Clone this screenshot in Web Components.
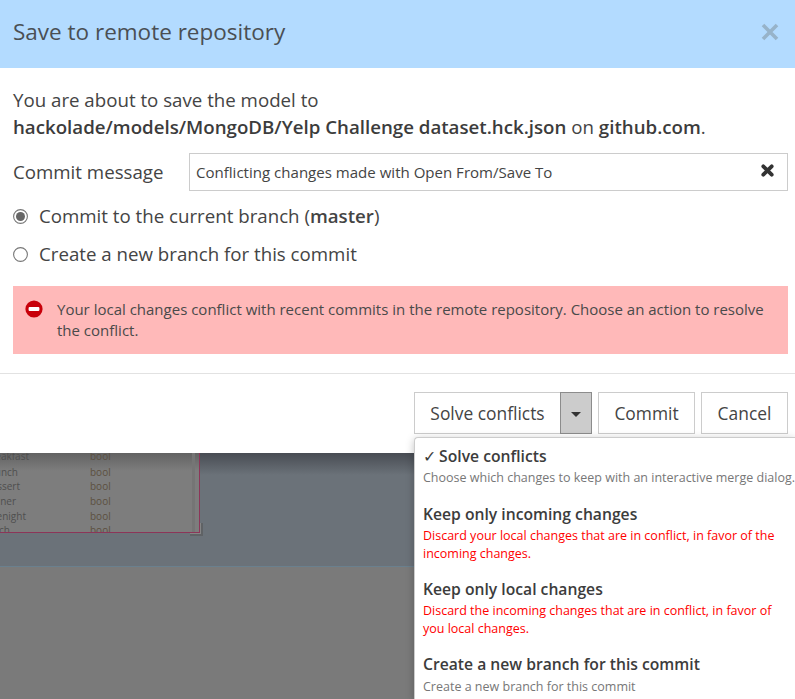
<!DOCTYPE html>
<html>
<head>
<meta charset="utf-8">
<title>Save to remote repository</title>
<style>
    html, body { margin: 0; padding: 0; height: 699px; overflow: hidden; background: #6b7279; }
    body { font-family: "Open Sans", sans-serif; color: #444; }
</style>
</head>
<body>
<save-dialog></save-dialog>

<script>
class RadioRow extends HTMLElement {
    constructor() {
        super();
        const shadow = this.attachShadow({ mode: 'open' });
        const on = this.hasAttribute('checked');
        shadow.innerHTML = `
            <style>
                :host { display: flex; align-items: center; height: 38px; font-size: 18.7px; color: #444; }
                svg { width: 15px; height: 15px; margin-right: 11px; flex: none; }
                span { margin-top: -2px; }
            </style>
            <svg viewBox="0 0 15 15">
                <circle cx="7.5" cy="7.5" r="6.9" fill="#fff" stroke="#777" stroke-width="1.1"/>
                ${on ? '<circle cx="7.5" cy="7.5" r="4.5" fill="#666"/>' : ''}
            </svg>
            <span><slot></slot></span>
        `;
    }
}

class PlainButton extends HTMLElement {
    constructor() {
        super();
        const shadow = this.attachShadow({ mode: 'open' });
        shadow.innerHTML = `
            <style>
                :host {
                    display: flex; align-items: center; justify-content: center;
                    box-sizing: border-box; height: 42px;
                    border: 1px solid #ccc; background: #fff;
                    font-size: 17.4px; color: #444;
                }
            </style>
            <slot></slot>
        `;
    }
}

class MenuItem extends HTMLElement {
    constructor() {
        super();
        const shadow = this.attachShadow({ mode: 'open' });
        shadow.innerHTML = `
            <style>
                :host { display: block; padding: 0 0 0 8px; }
                .title { font-size: 15.7px; font-weight: 600; line-height: 22px; color: #3c3c3c; white-space: nowrap; }
                .desc { font-size: 12.5px; line-height: 18.5px; color: var(--desc, #777); margin-top: 2px; }
                :host([danger]) { --desc: #f00; }
                :host([last]) .desc { margin-top: 3px; }
            </style>
            <div class="title"><slot name="title"></slot></div>
            <div class="desc"><slot></slot></div>
        `;
    }
}

class SolveMenu extends HTMLElement {
    constructor() {
        super();
        const shadow = this.attachShadow({ mode: 'open' });
        shadow.innerHTML = `
            <style>
                :host {
                    position: absolute; z-index: 2; left: 414px; top: 437px; width: 381px; height: 262px;
                    box-sizing: border-box; padding-top: 7px;
                    background: #fff; border-left: 1px solid #ccc; border-top: 1px solid #ccc;
                    border-top-left-radius: 4px; box-shadow: 0 2px 8px rgba(0,0,0,.25);
                    display: flex; flex-direction: column; gap: 14px;
                }
                menu-item:first-of-type { white-space: nowrap; margin-bottom: 1px; }
                .check { font-size: 16px; line-height: 0; font-weight: 400; margin-right: -1px; }
            </style>
            <menu-item>
                <span slot="title"><span class="check">✓</span> Solve conflicts</span>
                Choose which changes to keep with an interactive merge dialog.
            </menu-item>
            <menu-item danger>
                <span slot="title">Keep only incoming changes</span>
                Discard your local changes that are in conflict, in favor of the<br>incoming changes.
            </menu-item>
            <menu-item danger>
                <span slot="title">Keep only local changes</span>
                Discard the incoming changes that are in conflict, in favor of<br>you local changes.
            </menu-item>
            <menu-item last>
                <span slot="title">Create a new branch for this commit</span>
                Create a new branch for this commit
            </menu-item>
        `;
    }
}

class DimmedCanvas extends HTMLElement {
    constructor() {
        super();
        const shadow = this.attachShadow({ mode: 'open' });
        // name, top of the row, x where the visible part of the name ends
        const rows = [['eakfast', -3, 29], ['unch', 13, 18], ['ssert', 27, 20], ['ner', 42, 16], ['enight', 57, 26], ['nch', 71, 10]];
        shadow.innerHTML = `
            <style>
                :host {
                    display: block; position: relative; height: 246px; overflow: hidden;
                    background: linear-gradient(#484c53 0, #6b7279 22px);
                    font-size: 10px; color: #4f4f4f;
                }
                .card {
                    position: absolute; left: 0; top: -4px; width: 200px; height: 84px;
                    box-sizing: border-box; background: linear-gradient(#5c5c5c 0, #7d7d7d 22px);
                    border-right: 1px solid #8c3558; border-bottom: 1px solid #8c3558;
                    overflow: hidden;
                }
                .bar { position: absolute; right: 4px; top: 0; bottom: 0; width: 3px; background: #757575; }
                .row { position: absolute; left: 0; width: 130px; line-height: 12px; }
                .row b { position: absolute; left: 90px; font-weight: 400; color: #5c5040; }
                .row i { position: absolute; font-style: normal; white-space: nowrap; }
                .grip {
                    position: absolute; left: 190px; top: 70px; width: 13px; height: 13px;
                    border-right: 2px solid #5f6265; border-bottom: 2px solid #5f6265;
                    box-shadow: inset -1px -1px #858585;
                    box-sizing: border-box;
                }
                .band {
                    position: absolute; left: 0; right: 0; top: 113px; bottom: 0;
                    background: #7a7a7a; border-top: 1px solid #6a808e;
                }
            </style>
            <div class="card">
                <div class="bar"></div>
                ${rows.map(r => `<div class="row" style="top:${r[1] + 4}px"><i style="right:${130 - r[2]}px">${r[0]}</i><b>bool</b></div>`).join('')}
            </div>
            <div class="grip"></div>
            <div class="band"></div>
        `;
    }
}

class SaveDialog extends HTMLElement {
    constructor() {
        super();
        const shadow = this.attachShadow({ mode: 'open' });
        shadow.innerHTML = `
            <style>
                :host { display: block; position: relative; height: 699px; font-family: "Open Sans", sans-serif; color: #444; }
                .dialog { background: #fff; height: 453px; box-sizing: border-box; position: relative; z-index: 1; }
                header {
                    height: 68px; background: #b3dbff;
                    display: flex; align-items: center; justify-content: space-between;
                    padding: 0 16px 0 13px; box-sizing: border-box;
                }
                h1 { margin: 0; font-size: 22.5px; font-weight: 400; color: #4a4f54; position: relative; top: -3px; }
                .close { width: 18px; height: 18px; margin-top: -5px; }
                .body { padding: 18px 7px 0 13px; }
                .intro { font-size: 18.7px; line-height: 27px; color: #444; white-space: nowrap; }
                .intro b { font-weight: 600; color: #3c3c3c; }
                .msg-row { display: flex; align-items: center; margin-top: 13px; }
                .msg-row label { width: 176px; font-size: 18.7px; margin-top: -2px; }
                .msg-input {
                    flex: 1; height: 38px; box-sizing: border-box;
                    border: 1px solid #ccc; display: flex; align-items: center; justify-content: space-between;
                    padding: 0 13px 0 6px; font-size: 15.05px; color: #444;
                }
                .msg-input svg { width: 13px; height: 13px; margin-top: -3px; }
                .radios { margin-top: 6px; }
                .alert {
                    margin-top: 13px; height: 68px; box-sizing: border-box; background: #ffb9b9;
                    display: flex; padding: 13px 10px 0 12px;
                    font-size: 15px; line-height: 21px; color: #4a4a4a;
                }
                .alert svg { width: 18px; height: 18px; flex: none; margin: 1px 14px 0 0; }
                hr { border: 0; border-top: 1px solid #e2e2e2; margin: 19px 0 0; }
                .actions { display: flex; justify-content: flex-end; gap: 6px; padding: 18px 7px 0 0; }
                .split { display: flex; width: 178px; }
                .split plain-button:first-child { flex: 1; border-right: 0; }
                .caret {
                    width: 32px; height: 42px; box-sizing: border-box; background: #ccc; border: 1px solid #8c8c8c;
                    display: flex; align-items: center; justify-content: center;
                }
                .caret i { width: 0; height: 0; border: 5px solid transparent; border-top: 5px solid #333; border-bottom: 0; margin-top: 2px; }
                .commit { width: 97px; }
                .cancel { width: 87px; }
            </style>
            <div class="dialog">
                <header>
                    <h1>Save to remote repository</h1>
                    <svg class="close" viewBox="0 0 18 18"><path d="M2 2 16 16M16 2 2 16" stroke="#97b3c9" stroke-width="3.6" fill="none"/></svg>
                </header>
                <div class="body">
                    <div class="intro">You are about to save the model to<br><b>hackolade/models/MongoDB/Yelp Challenge dataset.hck.json</b> on <b>github.com</b>.</div>
                    <div class="msg-row">
                        <label>Commit message</label>
                        <div class="msg-input">
                            <span>Conflicting changes made with Open From/Save To</span>
                            <svg viewBox="0 0 13 13"><path d="M2.3 2.3 10.7 10.7M10.7 2.3 2.3 10.7" stroke="#333" stroke-width="3.8" stroke-linecap="round" fill="none"/></svg>
                        </div>
                    </div>
                    <div class="radios">
                        <radio-row checked>Commit to the current branch (<b style="font-weight:600">master</b>)</radio-row>
                        <radio-row>Create a new branch for this commit</radio-row>
                    </div>
                    <div class="alert">
                        <svg viewBox="0 0 18 18"><circle cx="9" cy="9" r="8.6" fill="#c8000a"/><rect x="3.6" y="7" width="10.8" height="4" rx="1" fill="#fff"/></svg>
                        <div>Your local changes conflict with recent commits in the remote repository. Choose an action to resolve the conflict.</div>
                    </div>
                </div>
                <hr>
                <div class="actions">
                    <div class="split">
                        <plain-button>Solve conflicts</plain-button>
                        <div class="caret"><i></i></div>
                    </div>
                    <plain-button class="commit">Commit</plain-button>
                    <plain-button class="cancel">Cancel</plain-button>
                </div>
            </div>
            <dimmed-canvas></dimmed-canvas>
            <solve-menu></solve-menu>
        `;
    }
}

customElements.define('radio-row', RadioRow);
customElements.define('plain-button', PlainButton);
customElements.define('menu-item', MenuItem);
customElements.define('solve-menu', SolveMenu);
customElements.define('dimmed-canvas', DimmedCanvas);
customElements.define('save-dialog', SaveDialog);
</script>
</body>
</html>
